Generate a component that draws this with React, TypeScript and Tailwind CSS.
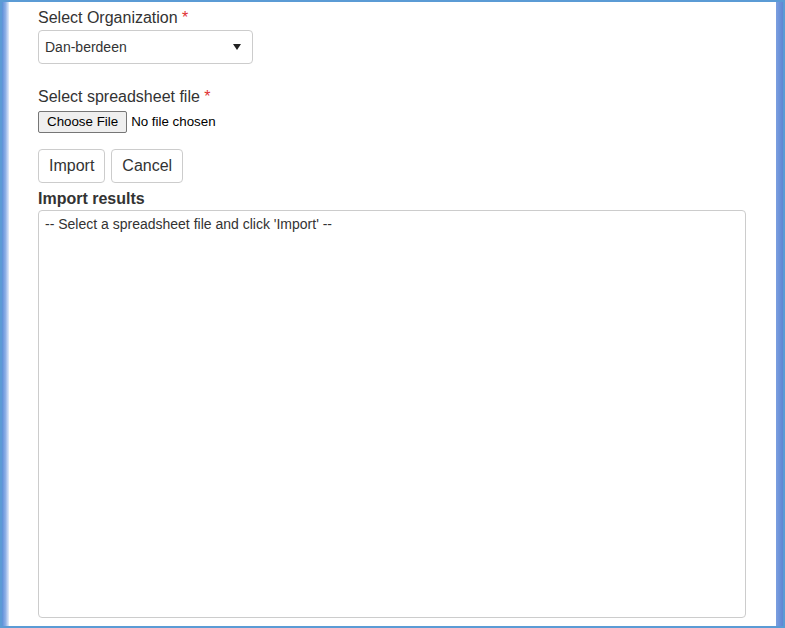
import React, { useState } from 'react';

const font = { fontFamily: '"Liberation Sans", Arial, sans-serif' };

const ImportPage: React.FC = () => {
  const [org, setOrg] = useState('Dan-berdeen');
  const [results] = useState("-- Select a spreadsheet file and click 'Import' --");

  return (
    <div className="w-[785px] h-[628px] border-2 border-[#5b9bd5] flex bg-white text-[#333]" style={font}>
      {/* left decorative strip */}
      <div className="w-[7px] bg-gradient-to-r from-[#5b8fd8] via-[#8fb0e6] to-[#e6eefa]" />

      <div className="flex-1 bg-white pl-[29px] pr-[29px] pt-[5px]">
        <label className="block text-[16px] leading-[22px] text-[#333]">
          Select Organization <span className="text-[#e03131]">*</span>
        </label>
        <div className="relative mt-[1px] w-[215px]">
          <select
            value={org}
            onChange={(e) => setOrg(e.target.value)}
            className="appearance-none w-full h-[34px] border border-[#ccc] rounded-[4px] bg-white pl-[6px] pr-6 text-[14px] text-[#333] outline-none"
            style={font}
          >
            <option>Dan-berdeen</option>
          </select>
          <span className="pointer-events-none absolute right-[12px] top-[14px] w-0 h-0 border-l-[4px] border-r-[4px] border-t-[6px] border-l-transparent border-r-transparent border-t-[#222]" />
        </div>

        <label className="block mt-[22px] text-[16px] leading-[22px] text-[#333]">
          Select spreadsheet file <span className="text-[#e03131]">*</span>
        </label>
        <div className="mt-[3px] flex items-center text-[13.33px] text-black">
          <span className="h-[22px] px-[8px] flex items-center bg-[#efefef] border border-[#767676] rounded-[2px]">Choose File</span>
          <span className="ml-[4px]">No file chosen</span>
        </div>

        <div className="mt-[16px] flex gap-[6px]">
          <button className="h-[34px] px-[10px] border border-[#ccc] rounded-[4px] bg-white text-[16px] text-[#333]" style={font}>
            Import
          </button>
          <button className="h-[34px] px-[10px] border border-[#ccc] rounded-[4px] bg-white text-[16px] text-[#333]" style={font}>
            Cancel
          </button>
        </div>

        <div className="mt-[5px] text-[16px] leading-[22px] font-bold text-[#333]">Import results</div>
        <textarea
          readOnly
          value={results}
          className="mt-[0px] block w-[708px] h-[408px] border border-[#ccc] rounded-[4px] px-[6px] pt-[3px] text-[14px] leading-[20px] text-[#333] resize-none outline-none"
          style={font}
        />
      </div>

      {/* right decorative strip */}
      <div className="w-[7px] bg-gradient-to-r from-[#7b9fe0] to-[#5f86d3]" />
    </div>
  );
};

export default ImportPage;
